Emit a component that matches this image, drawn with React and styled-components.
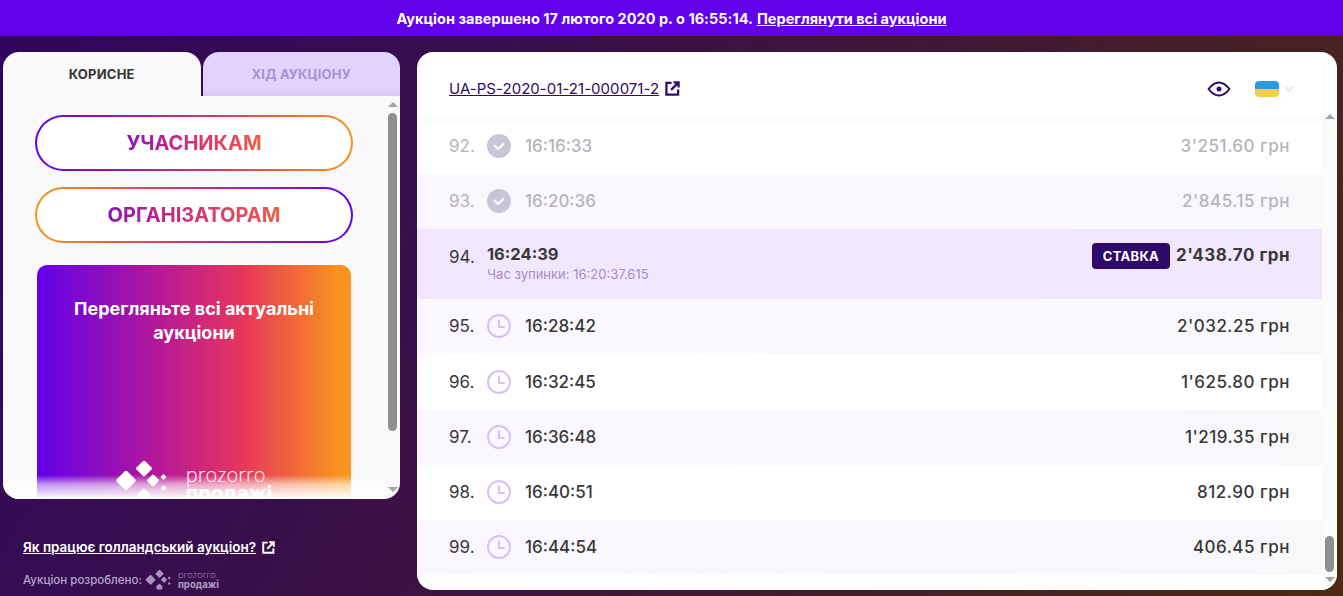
import React from 'react'
import styled, { createGlobalStyle } from 'styled-components'

const GlobalStyle = createGlobalStyle`
html, body {
  margin: 0;
  padding: 0;
  height: 100%;
}
body {
  font-family: Inter, "Noto Sans", sans-serif;
  background: linear-gradient(120deg, #30065f 0%, #3a1048 38%, #4c2a10 100%);
  overflow: hidden;
}
* { box-sizing: border-box; }
`

const Page = styled.div`
width: 1343px;
height: 596px;
display: flex;
flex-direction: column;
`

const Banner = styled.div`
height: 36px;
flex: none;
background: #6200ea;
color: #fff;
font-size: 14.5px;
letter-spacing: 0.03px;
font-weight: 700;
display: flex;
align-items: center;
justify-content: center;
gap: 4px;

a {
  color: #fff;
  text-decoration: underline;
}
`

const Main = styled.div`
display: flex;
gap: 17px;
padding: 16px 6px 6px 3px;
flex: 1;
min-height: 0;
`

const Side = styled.div`
width: 397px;
flex: none;
display: flex;
flex-direction: column;
`

const Tabs = styled.div`
display: flex;
gap: 2px;
height: 44px;
flex: none;
`

const Tab = styled.div`
flex: 1;
border-radius: 16px 16px 0 0;
display: flex;
align-items: center;
justify-content: center;
font-size: 13px;
font-weight: 700;
letter-spacing: 0.2px;
background: ${p => (p.$active ? '#f9f9fc' : 'linear-gradient(to bottom, #e2d3fc 80%, #d9c9f5)')};
color: ${p => (p.$active ? '#333' : '#a991d3')};
`

const Panel = styled.div`
height: 403px;
flex: none;
background: #f9f9fc;
border-radius: 0 0 16px 16px;
display: flex;
overflow: hidden;
position: relative;
`

const PanelBody = styled.div`
flex: 1;
min-width: 0;
padding: 19px 32px 0 32px;
display: flex;
flex-direction: column;
`

const CtaButton = styled.a`
height: 56px;
flex: none;
border: 2px solid transparent;
border-radius: 28px;
margin-bottom: 16px;
background:
  linear-gradient(#fff, #fff) padding-box,
  linear-gradient(${p => (p.$reverse ? '270deg' : '90deg')}, #6200ea, #e8375a 60%, #f7931e) border-box;
display: flex;
align-items: center;
justify-content: center;
`

const CtaLabel = styled.span`
font-size: 20px;
font-weight: 700;
background: linear-gradient(90deg, #8a14b4, #d42c78 45%, #ee5d45);
-webkit-background-clip: text;
background-clip: text;
color: transparent;
`

const Promo = styled.div`
margin: 6px 2px 0;
height: 290px;
flex: none;
border-radius: 10px;
background: linear-gradient(90deg, #6200ea 0%, #b3189a 38%, #e8375a 66%, #f7931e 96%);
padding: 32px 30px 0;
display: flex;
flex-direction: column;
align-items: center;
justify-content: space-between;
`

const PromoTitle = styled.div`
color: #fff;
font-size: 18px;
font-weight: 700;
line-height: 24px;
text-align: center;
`

const LogoRow = styled.div`
display: flex;
align-items: flex-start;
gap: ${p => (p.$small ? '5px' : '16px')};
color: ${p => p.$color || '#fff'};
margin-bottom: ${p => (p.$small ? '0' : '53px')};
`

const LogoText = styled.div`
display: flex;
flex-direction: column;
font-size: ${p => (p.$small ? '9.5px' : '20px')};
line-height: ${p => (p.$small ? '10px' : '18px')};
padding-top: ${p => (p.$small ? '0' : '5px')};
`

const LogoTop = styled.span`
font-weight: 300;
font-family: "Open Sans", Inter, sans-serif;
`

const LogoBottom = styled.span`
font-weight: 800;
`

const Fade = styled.div`
position: absolute;
left: 0;
right: 15px;
bottom: 0;
height: 24px;
background: linear-gradient(to bottom, rgba(255, 255, 255, 0), rgba(255, 255, 255, 0.6) 40%, #fff 100%);
`

const Track = styled.div`
width: 15px;
flex: none;
display: flex;
flex-direction: column;
align-items: center;
padding: ${p => p.$pad || '6px 0 7px'};
margin-top: ${p => p.$offset || 0}px;
background: ${p => p.$bg || 'transparent'};
`

const ArrowUp = styled.div`
width: 0;
height: 0;
flex: none;
border-left: 5px solid transparent;
border-right: 5px solid transparent;
border-bottom: 5px solid #a3a3a3;
`

const ArrowDown = styled(ArrowUp)`
border-bottom: none;
border-top: 5px solid #a3a3a3;
margin-top: auto;
`

const Thumb = styled.div`
width: 9px;
flex: none;
border-radius: 5px;
background: #8f8f8f;
height: ${p => p.$height}px;
margin-top: ${p => p.$top}px;
`

const SideFooter = styled.div`
padding: 40px 0 0 20px;
display: flex;
flex-direction: column;
gap: 15px;
`

const HelpLink = styled.a`
display: flex;
align-items: center;
gap: 6px;
font-size: 13.5px;
font-weight: 600;
color: #fff;

span {
  text-decoration: underline;
}
`

const Credit = styled.div`
display: flex;
align-items: center;
gap: 3px;
font-size: 11.5px;
font-weight: 500;
color: #b7a6cb;
`

const Card = styled.div`
flex: 1;
min-width: 0;
height: 538px;
background: #fff;
border-radius: 16px;
display: flex;
overflow: hidden;
`

const CardMain = styled.div`
flex: 1;
min-width: 0;
display: flex;
flex-direction: column;
`

const CardHead = styled.div`
height: 66px;
flex: none;
padding: 7px 28px 0 32px;
display: flex;
align-items: center;
justify-content: space-between;
box-shadow: 0 2px 6px rgba(60, 20, 110, 0.03);
position: relative;
`

const TenderLink = styled.a`
display: flex;
align-items: center;
gap: 6px;
color: #2f0a6b;
font-size: 15px;
letter-spacing: 0.04px;

span {
  text-decoration: underline;
}
`

const HeadTools = styled.div`
display: flex;
align-items: center;
gap: 24px;
`

const Flag = styled.div`
width: 24px;
height: 16px;
border-radius: 4px;
background: linear-gradient(to bottom, #2a9bdc 50%, #f5cd4c 50%);
`

const LangPick = styled.div`
display: flex;
align-items: center;
gap: 5px;
`

const List = styled.div`
flex: 1;
min-height: 0;
padding: 1px 0 0;
`

const Row = styled.div`
height: ${p => p.$height || 55}px;
padding: 0 32px 2px;
display: flex;
align-items: center;
font-size: 17px;
color: ${p => (p.$done ? '#b6b4ba' : '#383838')};
background: ${p => (p.$active ? '#f2e8fd' : p.$odd ? 'linear-gradient(90deg, #fbf7ff, #f8f8fb)' : '#fff')};
`

const Num = styled.div`
min-width: 27px;
margin-right: 11px;
margin-top: ${p => (p.$lift ? '-12px' : '0')};
`

const Time = styled.div`
margin-left: 14px;
font-weight: 500;
`

const Stack = styled.div`
display: flex;
flex-direction: column;
gap: 3px;
margin-top: -1px;
`

const ActiveTime = styled.div`
font-weight: 700;
font-size: 16.5px;
line-height: 20px;
`

const Sub = styled.div`
font-size: 13px;
line-height: 14px;
color: #a68cc8;
`

const Amount = styled.div`
margin-left: auto;
font-weight: ${p => (p.$bold ? 700 : 500)};
letter-spacing: ${p => (p.$bold ? '0.5px' : '0.5px')};
margin-top: ${p => (p.$bold ? '-16px' : '0')};
`

const Badge = styled.div`
margin-left: auto;
margin-top: -14px;
background: #2f0a6b;
color: #fff;
font-size: 13px;
font-weight: 700;
letter-spacing: 0.3px;
height: 26px;
width: 78px;
border-radius: 4px;
display: flex;
align-items: center;
justify-content: center;
& + ${Amount} {
  margin-left: 6px;
}
`

const ExternalIcon = ({ size = 16, color = '#2f0a6b' }) => (
  <svg width={size} height={size} viewBox="0 0 16 16" fill="none" stroke={color} strokeWidth="2.4">
    <path d="M7 2H1.500v12.500H14V9" />
    <path d="M6.500 9.500 13.500 2.500M9 1.500h5.500V7" />
  </svg>
)

const CheckIcon = () => (
  <svg width="24" height="24" viewBox="0 0 24 24" fill="none">
    <circle cx="12" cy="12" r="12" fill="#c9c5d6" />
    <path d="M7.500 11.500 11 15l5.500-5" stroke="#fff" strokeWidth="2" strokeLinecap="round" strokeLinejoin="round" />
  </svg>
)

const ClockIcon = () => (
  <svg width="24" height="24" viewBox="0 0 24 24" fill="none" stroke="#d9bff7" strokeWidth="2" strokeLinecap="round">
    <circle cx="12" cy="12" r="11" />
    <path d="M12 6.500V13h5" />
  </svg>
)

const EyeIcon = () => (
  <svg width="24" height="16" viewBox="0 0 24 16" fill="none">
    <path d="M1.500 8C5 3.500 8.500 1.500 12 1.500S19 3.500 22.500 8C19 12.500 15.500 14.500 12 14.500S5 12.500 1.500 8Z" stroke="#2f0a6b" strokeWidth="2" strokeLinejoin="round" />
    <circle cx="12" cy="8" r="2.500" fill="#2f0a6b" />
  </svg>
)

const Chevron = () => (
  <svg width="10" height="6" viewBox="0 0 10 6" fill="none" stroke="#e0dfe4" strokeWidth="1.500">
    <path d="M1 1l4 4 4-4" />
  </svg>
)

const Diamonds = ({ width, height, color }) => (
  <svg width={width} height={height} viewBox="0 0 54 40" fill={color}>
    <path d="M11.500 7.500q1.500-1.500 3 0l7.500 7.500q1.500 1.500 0 3L14.500 25.500q-1.500 1.500-3 0L4 18q-1.500-1.500 0-3Z" transform="translate(-3 3)" />
    <path d="M27 0q1-1 2 0l6.500 6.500q1 1 0 2L29 15q-1 1-2 0L20.500 8.500q-1-1 0-2Z" />
    <path d="M36 14q1-1 2 0l4.500 4.500q1 1 0 2L38 25q-1 1-2 0l-4.500-4.500q-1-1 0-2Z" />
    <path d="M47.500 13l3 3-3 3-3-3ZM47.500 24l3 3-3 3-3-3Z" />
    <path d="M27 28q1-1 2 0l5 5-1 6H23l-2-6Z" />
  </svg>
)

const rows = [
  { n: '92.', time: '16:16:33', sum: "3'251.60 грн", done: true },
  { n: '93.', time: '16:20:36', sum: "2'845.15 грн", done: true, odd: true },
  { n: '94.', time: '16:24:39', sum: "2'438.70 грн", active: true, height: 70 },
  { n: '95.', time: '16:28:42', sum: "2'032.25 грн", odd: true, height: 56 },
  { n: '96.', time: '16:32:45', sum: "1'625.80 грн" },
  { n: '97.', time: '16:36:48', sum: "1'219.35 грн", odd: true },
  { n: '98.', time: '16:40:51', sum: '812.90 грн' },
  { n: '99.', time: '16:44:54', sum: '406.45 грн', odd: true },
]

const App = () => (
  <Page>
    <GlobalStyle />
    <Banner>
      Аукціон завершено 17 лютого 2020 р. о 16:55:14. <a>Переглянути всі аукціони</a>
    </Banner>
    <Main>
      <Side>
        <Tabs>
          <Tab $active>КОРИСНЕ</Tab>
          <Tab>ХІД АУКЦІОНУ</Tab>
        </Tabs>
        <Panel>
          <PanelBody>
            <CtaButton><CtaLabel>УЧАСНИКАМ</CtaLabel></CtaButton>
            <CtaButton $reverse><CtaLabel>ОРГАНІЗАТОРАМ</CtaLabel></CtaButton>
            <Promo>
              <PromoTitle>Перегляньте всі актуальні аукціони</PromoTitle>
              <LogoRow>
                <Diamonds width={54} height={40} color="#fff" />
                <LogoText>
                  <LogoTop>prozorro</LogoTop>
                  <LogoBottom>продажі</LogoBottom>
                </LogoText>
              </LogoRow>
            </Promo>
          </PanelBody>
          <Track>
            <ArrowUp />
            <Thumb $top={6} $height={318} />
            <ArrowDown />
          </Track>
          <Fade />
        </Panel>
        <SideFooter>
          <HelpLink>
            <span>Як працює голландський аукціон?</span>
            <ExternalIcon size={13} color="#fff" />
          </HelpLink>
          <Credit>
            Аукціон розроблено:
            <LogoRow $small $color="#a793bd">
              <Diamonds width={28} height={20} color="#a793bd" />
              <LogoText $small>
                <LogoTop>prozorro</LogoTop>
                <LogoBottom>продажі</LogoBottom>
              </LogoText>
            </LogoRow>
          </Credit>
        </SideFooter>
      </Side>
      <Card>
        <CardMain>
          <CardHead>
            <TenderLink>
              <span>UA-PS-2020-01-21-000071-2</span>
              <ExternalIcon size={15} />
            </TenderLink>
            <HeadTools>
              <EyeIcon />
              <LangPick>
                <Flag />
                <Chevron />
              </LangPick>
            </HeadTools>
          </CardHead>
          <List>
            {rows.map(r => (
              <Row key={r.n} $done={r.done} $active={r.active} $odd={r.odd} $height={r.height}>
                <Num $lift={r.active}>{r.n}</Num>
                {r.active ? (
                  <Stack>
                    <ActiveTime>{r.time}</ActiveTime>
                    <Sub>Час зупинки: 16:20:37.615</Sub>
                  </Stack>
                ) : (
                  <>
                    {r.done ? <CheckIcon /> : <ClockIcon />}
                    <Time>{r.time}</Time>
                  </>
                )}
                {r.active && <Badge>СТАВКА</Badge>}
                <Amount $bold={r.active}>{r.sum}</Amount>
              </Row>
            ))}
          </List>
        </CardMain>
        <Track $bg="#fbfbfc" $offset={61} $pad="1px 0 8px">
          <ArrowUp />
          <Thumb $top={417} $height={36} />
          <ArrowDown />
        </Track>
      </Card>
    </Main>
  </Page>
)

export default App
